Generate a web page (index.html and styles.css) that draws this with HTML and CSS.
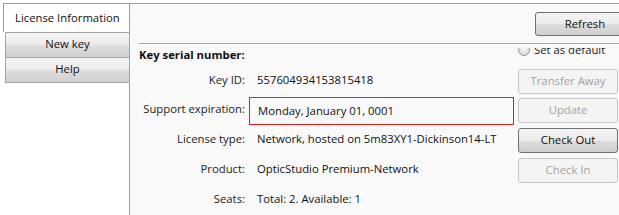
FILE: index.html
```html
<!DOCTYPE html>
<html>
<head>
<meta charset="utf-8">
<link rel="stylesheet" href="styles.css">
</head>
<body>
<div class="window">
  <div class="sidebar">
    <div class="tab">License Information</div>
    <div class="side-btn">New key</div>
    <div class="side-btn side-btn-next">Help</div>
  </div>
  <div class="main">
    <div class="header"><div class="btn btn-refresh">Refresh</div></div>
    <div class="details">
      <div class="section-title">Key serial number:</div>
      <div class="radio-wrap"><div class="radio"><span class="dot"></span><span class="radio-text">Set as default</span></div></div>

      <div class="label">Key ID:</div>
      <div class="value">557604934153815418</div>
      <div class="btn disabled">Transfer Away</div>

      <div class="label">Support expiration:</div>
      <div class="value highlight">Monday, January 01, 0001</div>
      <div class="btn disabled">Update</div>

      <div class="label">License type:</div>
      <div class="value">Network, hosted on 5m83XY1-Dickinson14-LT</div>
      <div class="btn">Check Out</div>

      <div class="label">Product:</div>
      <div class="value">OpticStudio Premium-Network</div>
      <div class="btn disabled">Check In</div>

      <div class="label">Seats:</div>
      <div class="value">Total: 2. Available: 1</div>
    </div>
  </div>
</div>
</body>
</html>
```
FILE: styles.css
```css
html, body {
  margin: 0;
  padding: 0;
}
body {
  background: #ffffff;
  font-family: "Open Sans", "Noto Sans", sans-serif;
  font-size: 11.3px;
  line-height: 16px;
  color: #151515;
}
.window {
  width: 619px;
  height: 215px;
  overflow: hidden;
  display: flex;
  padding: 3px 0 0 3px;
  box-sizing: border-box;
}
.sidebar {
  width: 127px;
  flex: none;
  box-sizing: border-box;
  border-top: 1px solid #9c9c9c;
  border-right: 1px solid #9c9c9c;
  background: #ffffff;
}
.tab {
  height: 28px;
  border-left: 1px solid #9c9c9c;
  padding: 6px 0 0 11px;
  box-sizing: border-box;
  color: #111;
}
.side-btn {
  height: 26px;
  margin: 0 -1px 0 2px;
  box-sizing: border-box;
  border: 1px solid #a4a4a4;
  background: linear-gradient(#f4f4f4 0%, #ececec 45%, #dcdcdc 55%, #d0d0d0 100%);
  text-align: center;
  line-height: 22px;
  color: #111;
}
.side-btn-next {
  margin-top: -1px;
}
.main {
  flex: 1;
  border-top: 1px solid #9c9c9c;
  background: #f9f9f9;
  min-width: 0;
}
.header {
  height: 39px;
  box-sizing: border-box;
  padding-top: 8px;
  display: flex;
  justify-content: flex-end;
  margin-right: -16px;
}
.btn {
  width: 100px;
  height: 24px;
  box-sizing: border-box;
  border: 1px solid #707070;
  border-radius: 3px;
  background: linear-gradient(#f3f3f3 0%, #ebebeb 50%, #dddddd 50%, #cfcfcf 100%);
  text-align: center;
  line-height: 21px;
  color: #111;
  flex: none;
}
.details .btn {
  height: 25px;
  margin-top: 3px;
  line-height: 22px;
}
.btn.disabled {
  border-color: #c3c6c9;
  background: #f4f4f4;
  color: #a3a3a3;
}
.details {
  margin-left: 9px;
  border-top: 1px solid #a8a8a8;
  display: grid;
  grid-template-columns: 106px 265px 100px;
  grid-template-rows: 21px 29px 30px 30px 30px 30px;
  column-gap: 4px;
  align-items: center;
}
.section-title {
  grid-column: 1 / 3;
  font-weight: bold;
  color: #111;
}
.radio-wrap {
  grid-column: 3;
  grid-row: 1;
  align-self: start;
  margin-top: 4px;
  height: 8px;
  overflow: hidden;
}
.radio {
  margin-top: -4px;
  display: flex;
  align-items: flex-start;
  line-height: 14px;
  color: #1b1b1b;
}
.radio-text {
  margin-top: -1px;
}
.dot {
  width: 12px;
  height: 12px;
  box-sizing: border-box;
  border-radius: 50%;
  border: 1px solid #9a9a9a;
  background: radial-gradient(circle at 50% 40%, #f6f6f6 0%, #dedede 70%, #cfcfcf 100%);
  margin-right: 4px;
  flex: none;
}
.label {
  text-align: right;
  color: #222;
  white-space: nowrap;
}
.value {
  padding-left: 8px;
  white-space: nowrap;
  color: #111;
}
.value.highlight {
  align-self: start;
  margin-top: 3px;
  height: 28px;
  box-sizing: border-box;
  border: 1px solid #e31b1b;
  padding-left: 8px;
  display: flex;
  align-items: center;
}
```
